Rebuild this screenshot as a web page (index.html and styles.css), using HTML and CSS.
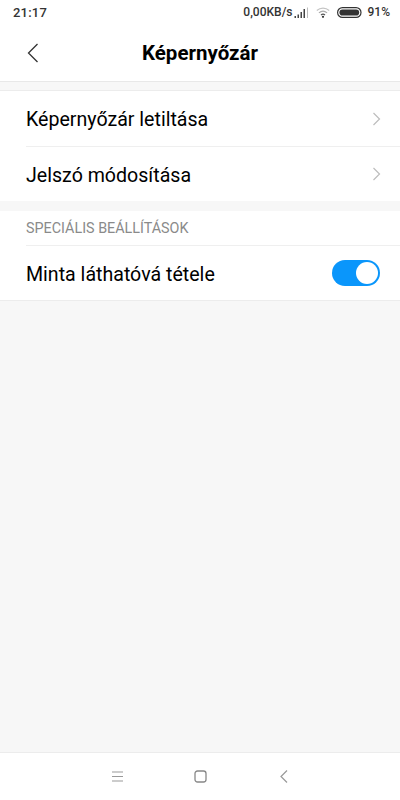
FILE: index.html
```html
<!DOCTYPE html>
<html lang="hu">
<head>
<meta charset="utf-8">
<title>Képernyőzár</title>
<link rel="stylesheet" href="styles.css">
</head>
<body>
<div class="status">
  <span class="clock">21:17</span>
  <div class="status-right">
    <span class="speed">0,00KB/s</span>
    <svg class="signal" width="15" height="11" viewBox="0 0 15 11"><path d="M0.500 9h1.500v2H0.500zM3.500 7.500h1.500V11H3.500zM6.500 5h1.500v6H6.500zM9.500 2h1.500v9H9.500z" fill="#444"/><path d="M13 0.500h1V11h-1z" fill="#bbb"/></svg>
    <svg class="wifi" width="14" height="11" viewBox="0 0 14 11"><path d="M0.800 3.500C4.400 0.300 9.600 0.300 13.200 3.500" fill="none" stroke="#c4c4c4" stroke-width="1.100"/><path d="M2.900 5.900C5.400 3.800 8.600 3.800 11.100 5.900" fill="none" stroke="#aaa" stroke-width="1.100"/><path d="M5 8C6.200 7 7.800 7 9 8" fill="none" stroke="#555" stroke-width="1.200"/><circle cx="7" cy="9.800" r="1.100" fill="#333"/></svg>
    <svg class="battery" width="25" height="11" viewBox="0 0 25 11"><rect x="0.600" y="0.600" width="23.400" height="9.800" rx="4.900" fill="none" stroke="#333" stroke-width="1.200"/><rect x="2.400" y="2.400" width="19.800" height="6.200" rx="3.100" fill="#333"/></svg>
    <span class="pct">91%</span>
  </div>
</div>
<header class="title-bar">
  <svg class="back" width="12" height="20" viewBox="0 0 12 20"><path d="M10.500 1L1.500 10l9 9" fill="none" stroke="#333" stroke-width="1.300"/></svg>
  <h1>Képernyőzár</h1>
</header>
<main class="content">
  <section class="group group-first">
    <div class="row">
      <span class="row-text">Képernyőzár letiltása</span>
      <svg class="chev" width="9" height="14" viewBox="0 0 9 14"><path d="M1.500 1l6 6-6 6" fill="none" stroke="#bdbdbd" stroke-width="1.200"/></svg>
    </div>
    <div class="row row-last">
      <span class="row-text">Jelszó módosítása</span>
      <svg class="chev" width="9" height="14" viewBox="0 0 9 14"><path d="M1.500 1l6 6-6 6" fill="none" stroke="#bdbdbd" stroke-width="1.200"/></svg>
    </div>
  </section>
  <section class="group group-second">
    <div class="label">SPECIÁLIS BEÁLLÍTÁSOK</div>
    <div class="row row-switch">
      <span class="row-text">Minta láthatóvá tétele</span>
      <div class="switch"><div class="knob"></div></div>
    </div>
  </section>
</main>
<nav class="navbar">
  <div class="nav-item"><svg width="13" height="11" viewBox="0 0 13 11"><path d="M1 1h11M1 5.500h11M1 10h11" stroke="#999" stroke-width="1.100" fill="none"/></svg></div>
  <div class="nav-item"><svg width="13" height="13" viewBox="0 0 13 13"><rect x="1" y="1" width="11" height="11" rx="2.500" fill="none" stroke="#888" stroke-width="1.300"/></svg></div>
  <div class="nav-item"><svg class="nav-back" width="8" height="13" viewBox="0 0 8 13"><path d="M7 0.500L1 6.500l6 6" fill="none" stroke="#999" stroke-width="1.200"/></svg></div>
</nav>
</body>
</html>
```
FILE: styles.css
```css
* { box-sizing: border-box; }
html, body { margin: 0; padding: 0; }
body {
  width: 400px;
  height: 800px;
  display: flex;
  flex-direction: column;
  background: #f7f7f7;
  font-family: Roboto, "Liberation Sans", sans-serif;
  color: #000;
  overflow: hidden;
}
.status {
  height: 26px;
  flex: none;
  background: #fff;
  display: flex;
  justify-content: space-between;
  align-items: center;
  padding: 0 10px 2px 13px;
  font-size: 12px;
  font-weight: 500;
  color: #333;
}
.clock { font-size: 13px; letter-spacing: 0.2px; }
.status-right { display: flex; align-items: center; }
.speed { font-size: 12px; }
.signal { margin-left: 1px; }
.wifi { margin-left: 7px; }
.battery { margin-left: 7px; }
.pct { margin-left: 6px; }
.title-bar {
  height: 56px;
  flex: none;
  background: #fff;
  border-bottom: 1px solid #e8e8e8;
  display: flex;
  align-items: center;
  justify-content: center;
  position: relative;
}
.title-bar h1 {
  margin: 0;
  font-size: 20.5px;
  font-weight: 700;
  line-height: 1;
}
.back { position: absolute; left: 27px; top: 17px; }
.content { flex: 1; display: flex; flex-direction: column; }
.group { background: #fff; }
.group-first { margin-top: 8px; border-top: 1px solid #ececec; }
.group-second { margin-top: 10px; border-bottom: 1px solid #ececec; }
.row {
  height: 56px;
  margin-left: 26px;
  padding-right: 19px;
  display: flex;
  align-items: center;
  justify-content: space-between;
  font-size: 19.6px;
  border-bottom: 1px solid #efefef;
}
.row-text { padding-top: 2px; }
.row-last { border-bottom: 0; height: 54px; }
.row-switch { border-bottom: 0; height: 54px; padding-right: 20px; }
.label {
  height: 35px;
  margin-left: 26px;
  padding-top: 1px;
  display: flex;
  align-items: center;
  font-size: 14.35px;
  color: #8a8a8a;
  border-bottom: 1px solid #efefef;
}
.switch {
  width: 48px;
  height: 26px;
  border-radius: 13px;
  background: #0a96fb;
  position: relative;
}
.knob {
  position: absolute;
  right: 2px;
  top: 2px;
  width: 22px;
  height: 22px;
  border-radius: 50%;
  background: #fff;
}
.navbar {
  height: 48px;
  flex: none;
  background: #fff;
  border-top: 1px solid #ececec;
  display: flex;
  align-items: center;
  justify-content: center;
  gap: 59px;
  padding-bottom: 1px;
}
.nav-item {
  width: 24px;
  display: flex;
  justify-content: center;
}
.nav-back { margin-left: 2px; }
```
